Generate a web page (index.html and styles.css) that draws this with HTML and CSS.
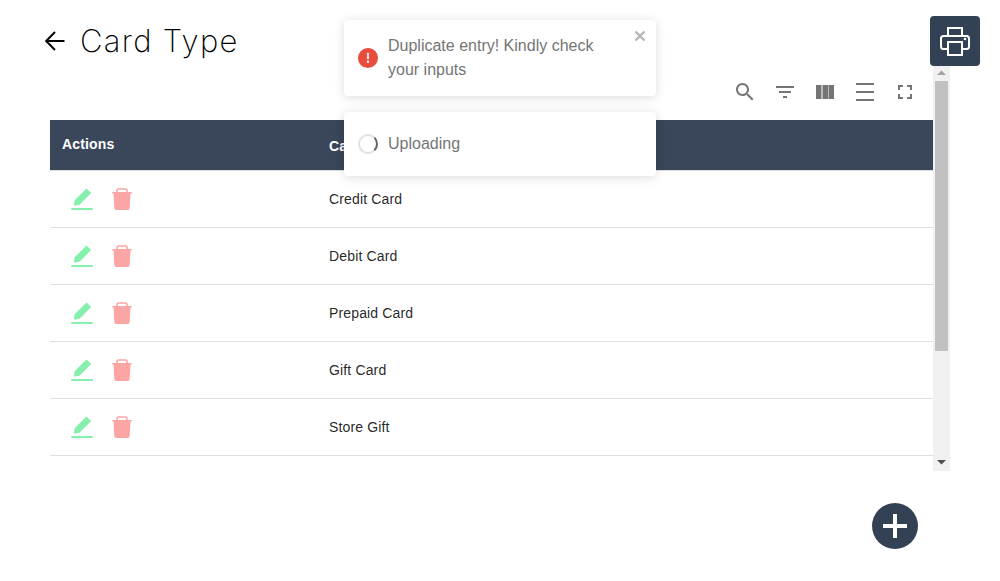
FILE: index.html
```html
<!DOCTYPE html>
<html lang="en">
<head>
<meta charset="utf-8">
<title>Card Type</title>
<link rel="stylesheet" href="styles.css">
</head>
<body>
<header class="page-header">
  <div class="heading">
    <svg class="back" viewBox="0 0 20 20"><path d="M19.500 10H1.500M10 1L1.200 10L10 19" fill="none" stroke="#000" stroke-width="1.900"/></svg>
    <h1 class="title">Card Type</h1>
  </div>
  <button class="print" aria-label="Print">
    <svg viewBox="0 0 30 30" fill="none" stroke="#fff" stroke-width="2"><path d="M8 9V2h14v7M8 23H3.500Q1 23 1 20.500V12.500Q1 10 3.500 10H26.500Q29 10 29 12.500V20.500Q29 23 26.500 23H22M8 16h14V29H8z"/><circle cx="25" cy="13" r="1.300" fill="#fff" stroke="none"/></svg>
  </button>
</header>

<main class="panel">
  <div class="content">
    <div class="toolbar">
      <svg viewBox="0 0 24 24"><path d="M15.500 14h-.79l-.28-.27C15.410 12.590 16 11.110 16 9.500 16 5.910 13.090 3 9.500 3S3 5.910 3 9.500 5.910 16 9.500 16c1.610 0 3.090-.59 4.230-1.570l.27.28v.79l5 4.990L20.490 19l-4.990-5zm-6 0C7.010 14 5 11.990 5 9.500S7.010 5 9.500 5 14 7.010 14 9.500 11.990 14 9.500 14z"/></svg>
      <svg viewBox="0 0 24 24"><path d="M10 18h4v-2h-4v2zM3 6v2h18V6H3zm3 7h12v-2H6v2z"/></svg>
      <svg viewBox="0 0 24 24"><path d="M3 5h5v14H3zM10 5h5v14h-5zM16 5h5v14h-5z"/><path d="M8 5h2v14H8zM15 5h1v14h-1z" opacity=".5"/></svg>
      <svg viewBox="0 0 24 24"><path d="M3 3h18v2H3zM3 11h18v2H3zM3 19h18v2H3z"/></svg>
      <svg viewBox="0 0 24 24"><path d="M7 14H5v5h5v-2H7v-3zm-2-4h2V7h3V5H5v5zm12 7h-3v2h5v-5h-2v3zM14 5v2h3v3h2V5h-5z"/></svg>
    </div>
    <div class="row head"><div class="actions-label">Actions</div><div class="name-label">Card Type</div></div>
    <div class="row"><div class="actions"><svg class="edit"><use href="#edit"/></svg><svg class="trash"><use href="#trash"/></svg></div><div class="name">Credit Card</div></div>
    <div class="row"><div class="actions"><svg class="edit"><use href="#edit"/></svg><svg class="trash"><use href="#trash"/></svg></div><div class="name">Debit Card</div></div>
    <div class="row"><div class="actions"><svg class="edit"><use href="#edit"/></svg><svg class="trash"><use href="#trash"/></svg></div><div class="name">Prepaid Card</div></div>
    <div class="row"><div class="actions"><svg class="edit"><use href="#edit"/></svg><svg class="trash"><use href="#trash"/></svg></div><div class="name">Gift Card</div></div>
    <div class="row"><div class="actions"><svg class="edit"><use href="#edit"/></svg><svg class="trash"><use href="#trash"/></svg></div><div class="name">Store Gift</div></div>
  </div>
  <div class="scrollbar">
    <svg class="arrow" viewBox="0 0 17 15"><path d="M4 9h9L8.500 4.500z" fill="#a3a3a3"/></svg>
    <div class="thumb"></div>
    <svg class="arrow down" viewBox="0 0 17 17"><path d="M4 6h9L8.500 10.500z" fill="#505050"/></svg>
  </div>
</main>

<footer class="footer">
  <button class="add" aria-label="Add">
    <svg viewBox="0 0 46 46"><path d="M21 11h4v10h10v4H25v10h-4V25H11v-4h10z" fill="#fff"/></svg>
  </button>
</footer>

<div class="toasts">
  <div class="toast error">
    <svg class="error-icon" viewBox="0 0 24 24"><path d="M11.983 0a12.206 12.206 0 00-8.510 3.653A11.800 11.800 0 000 12.207 11.779 11.779 0 0011.800 24h.214A12.111 12.111 0 0024 11.791 11.766 11.766 0 0011.983 0zM10.500 16.542a1.476 1.476 0 011.449-1.530h.027a1.527 1.527 0 011.523 1.470 1.475 1.475 0 01-1.449 1.530h-.027a1.529 1.529 0 01-1.523-1.470zM11 12.500v-6a1 1 0 012 0v6a1 1 0 11-2 0z" fill="#e74c3c"/></svg>
    <div class="message">Duplicate entry! Kindly check your inputs</div>
    <svg class="close" viewBox="0 0 12 12"><path d="M1.500 1.500l9 9M10.500 1.500l-9 9" stroke="#b3b3b3" stroke-width="2.200"/></svg>
  </div>
  <div class="toast">
    <div class="spinner"></div>
    <div class="message">Uploading</div>
  </div>
</div>

<svg class="symbols">
  <symbol id="edit" viewBox="0 0 22 22"><path d="M3 17L3.600 12.300L15.500 .4L20.200 5L8.500 16.700L4 17.600Q3 17.800 3 17zM1 20h20q1 0 1 1t-1 1H1q-1 0-1-1t1-1z" fill="#86efac"/></symbol>
  <symbol id="trash" viewBox="0 0 20 22"><path d="M5 4.500V2.500Q5 1 6.500 1h7q1.500 0 1.500 1.500v2" fill="none" stroke="#fca5a5" stroke-width="1.600"/><path d="M1 4h18q1 0 1 .800t-1 .800h-.500L17.700 20q-.100 2-2 2H4.300q-1.900 0-2-2L1.500 5.600H1q-1 0-1-.800T1 4z" fill="#fca5a5"/></symbol>
</svg>
</body>
</html>
```

FILE: styles.css
```css
* { box-sizing: border-box; }
body {
  margin: 0;
  height: 581px;
  overflow: hidden;
  background: #fff;
  font-family: "Liberation Sans", Arial, sans-serif;
}
svg { display: block; flex: none; }
button { border: 0; padding: 0; }
.page-header {
  display: flex;
  justify-content: space-between;
  height: 66px;
  padding: 16px 20px 0 45px;
}
.heading { display: flex; align-items: center; gap: 15px; }
.back { width: 20px; height: 20px; }
.title {
  margin: 0;
  font-family: Inter, "Open Sans", sans-serif;
  font-size: 31px;
  font-weight: 200;
  letter-spacing: 1.3px;
  line-height: 40px;
  color: #000;
}
.print {
  display: grid;
  place-items: center;
  width: 50px;
  height: 50px;
  border-radius: 4px;
  background: #334155;
}
.print svg { width: 30px; height: 30px; }
.panel { display: flex; width: 900px; height: 405px; margin-left: 50px; }
.content { width: 883px; }
.toolbar {
  display: flex;
  justify-content: flex-end;
  gap: 16px;
  height: 54px;
  padding: 14px 16px 0 0;
}
.toolbar svg { width: 24px; height: 24px; fill: #757575; }
.row {
  display: grid;
  grid-template-columns: 267px 1fr;
  align-items: center;
  height: 57px;
  border-bottom: 1px solid #e0e0e0;
  font-size: 14px;
  color: rgba(0, 0, 0, .87);
}
.head {
  height: 51px;
  background: #3a475a;
  background-clip: padding-box;
  color: #fff;
  font-weight: 700;
  letter-spacing: .15px;
}
.actions-label { padding: 0 0 2px 12px; }
.name-label { padding: 2px 0 0 12px; }
.name { padding-left: 12px; letter-spacing: .15px; }
.actions { display: flex; align-items: center; gap: 19px; padding-left: 21px; }
.edit { width: 22px; height: 22px; }
.trash { width: 20px; height: 22px; }
.scrollbar { display: flex; flex-direction: column; width: 17px; background: #f1f1f1; }
.arrow { width: 17px; height: 15px; }
.arrow.down { height: 17px; margin-top: auto; }
.thumb { width: 13px; height: 270px; margin-left: 2px; background: #c1c1c1; }
.footer { display: flex; justify-content: flex-end; padding: 32px 82px 0 0; }
.add { width: 46px; height: 46px; border-radius: 50%; background: #334155; }
.toasts {
  position: absolute;
  top: 20px;
  left: 344px;
  display: grid;
  gap: 16px;
  width: 312px;
}
.toast {
  display: flex;
  align-items: center;
  height: 64px;
  padding: 0 14px;
  gap: 10px;
  border-radius: 4px;
  background: #fff;
  box-shadow: 0 1px 10px rgba(0, 0, 0, .1), 0 2px 15px rgba(0, 0, 0, .05);
  color: #757575;
  font-size: 16px;
  line-height: 24px;
}
.error { height: 76px; padding-right: 10px; }
.message { flex: 1; }
.error-icon { width: 20px; height: 20px; }
.close { width: 12px; height: 12px; align-self: flex-start; margin-top: 10px; }
.spinner {
  width: 20px;
  height: 20px;
  border: 2px solid #e0e0e0;
  border-right-color: #616161;
  border-radius: 50%;
}
.symbols { position: absolute; width: 0; height: 0; }
```
